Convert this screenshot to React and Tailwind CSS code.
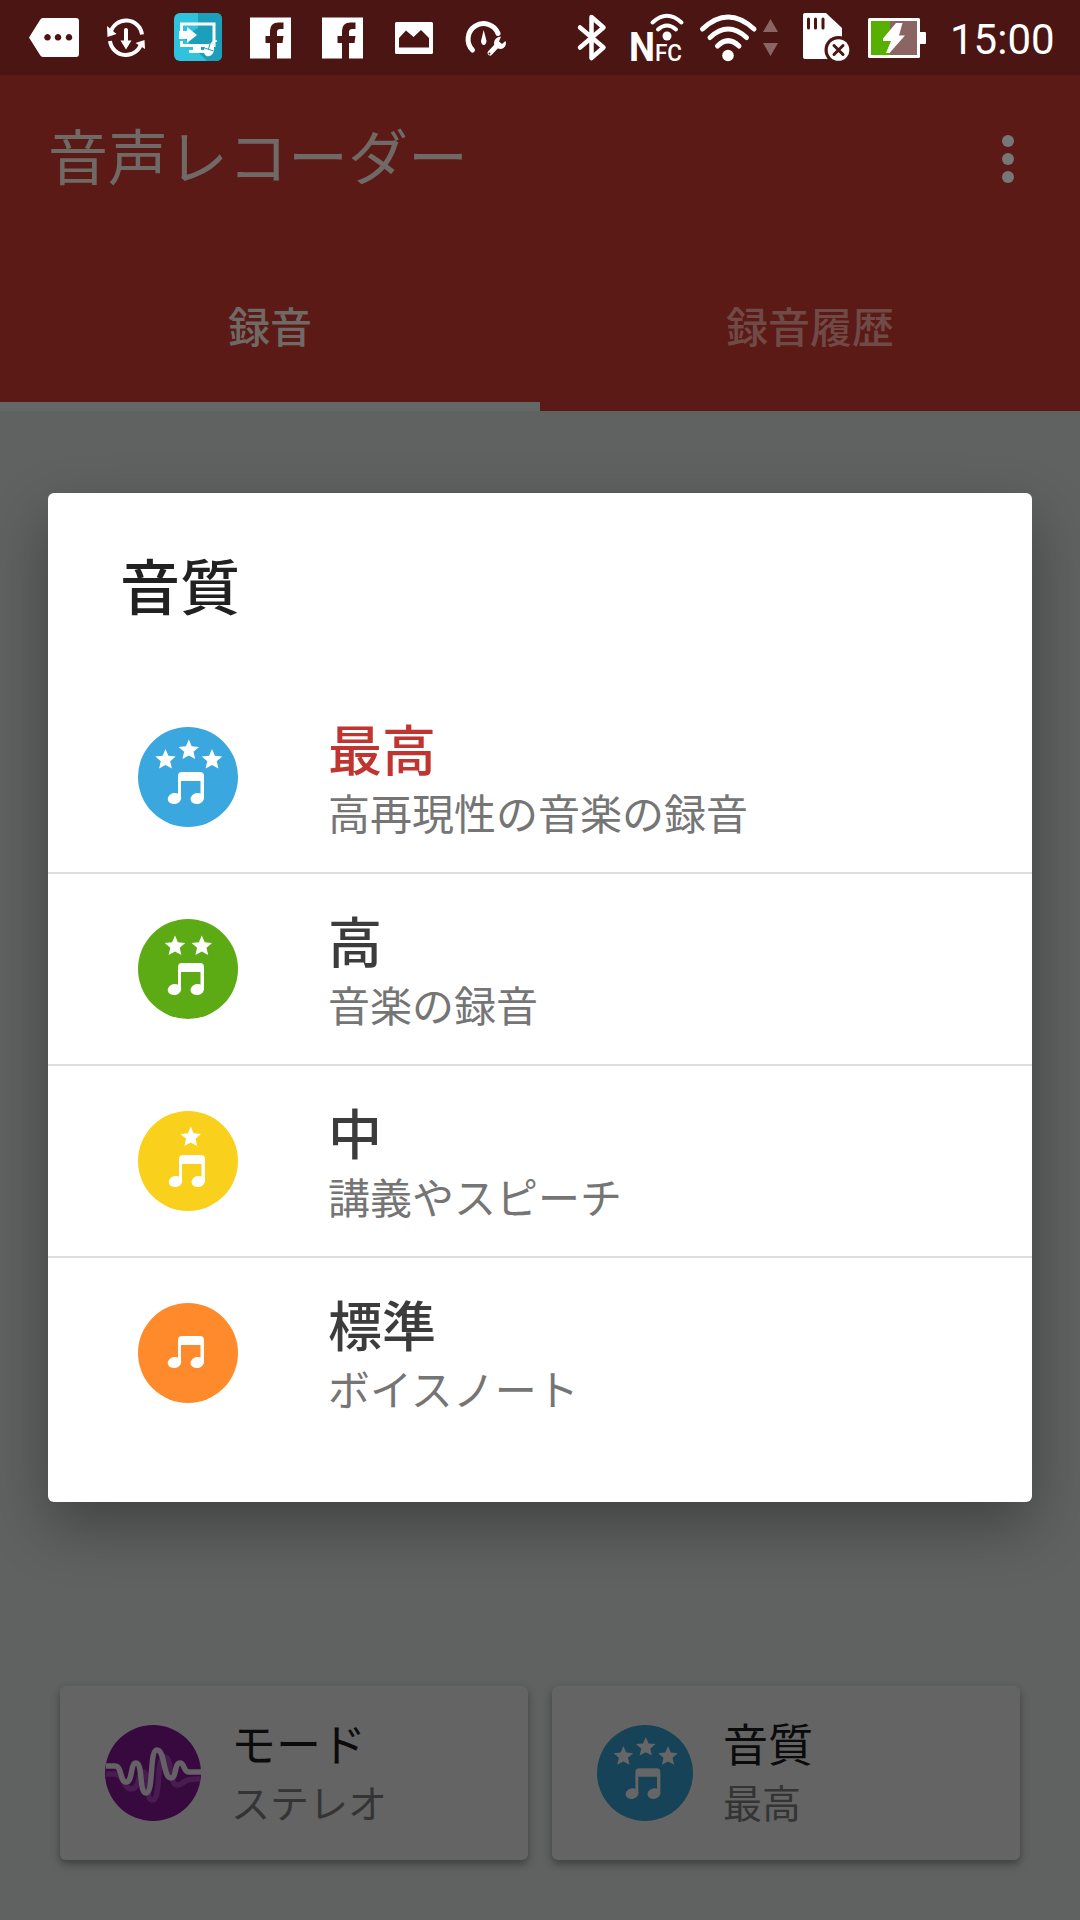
const jp = "font-['Noto_Sans_CJK_JP',sans-serif]";

const qualities = [
  { title: "最高", desc: "高再現性の音楽の録音", color: "#3aa7de", stars: [[27.5, 32.5], [50.8, 23], [74, 32.5]], selected: true },
  { title: "高", desc: "音楽の録音", color: "#5dab14", stars: [[37, 27], [63.8, 27]], noteY: -1 },
  { title: "中", desc: "講義やスピーチ", color: "#f9d11c", stars: [[52.8, 26]], noteX: 1, noteY: -1 },
  { title: "標準", desc: "ボイスノート", color: "#ff8a2b", stars: [], noteY: -12 },
];

const starPath =
  "M0 -10.5L2.9 -3.8L10.2 -3.1L4.7 1.7L6.4 8.9L0 5.5L-6.4 8.9L-4.7 1.7L-10.2 -3.1L-2.9 -3.8Z";

const QualityIcon = ({ color, stars, size = 100, fg = "#fff", noteX = 0, noteY = 0 }) => (
  <svg width={size} height={size} viewBox="0 0 100 100" className="shrink-0">
    <circle cx="50" cy="50" r="50" fill={color} />
    <g fill={fg}>
      {stars.map(([x, y]) => (
        <path key={x} d={starPath} transform={`translate(${x} ${y})`} />
      ))}
      <g transform={`translate(${noteX} ${noteY})`}>
        <path d="M40 72V49Q40 45 44 45H62Q66 45 66 49V72H62.500V54H43V72Z" />
        <ellipse cx="36.5" cy="71.5" rx="6.8" ry="5.5" transform="rotate(-12 36.5 71.5)" />
        <ellipse cx="59.3" cy="71.5" rx="6.8" ry="5.5" transform="rotate(-12 59.3 71.5)" />
      </g>
    </g>
  </svg>
);

// A slice of the status bar, `w` pixels wide and starting at `x`
const Glyph = ({ x, w, children }) => (
  <svg width={w} height="75" viewBox={`${x} 0 ${w} 75`} fill="#fff" className="shrink-0">
    {children}
  </svg>
);

const Facebook = ({ x }) => (
  <g transform={`translate(${x} 17.5)`}>
    <path d="M0 0H41V41H27V25.500H32.500L33.500 18.500H27V14.500Q27 11.500 30.500 11.500H33.500V5H28.500Q20 5 20 13.500V18.500H15.500V25.500H20V41H0Z" />
  </g>
);

const StatusBar = () => (
  <div className="flex h-[75px] items-center bg-[#4a1512]">
    <Glyph x={0} w={93}>
      <path
        fillRule="evenodd"
        d="M43 18H76Q79 18 79 21V54Q79 57 76 57H43Q41 57 40 55L29 37.500L40 20Q41 18 43 18ZM47.500 34a3.300 3.300 0 1 0 .01 0ZM58 34a3.300 3.300 0 1 0 .01 0ZM69 34a3.300 3.300 0 1 0 .01 0Z"
      />
    </Glyph>
    <Glyph x={93} w={67}>
      <g fill="none" stroke="#fff" strokeWidth="4">
        <path d="M110.500 33A16 16 0 0 1 142 34.500" />
        <path d="M110 41A16 16 0 0 0 141.500 42.500" />
        <path d="M126 30V44" strokeLinecap="round" />
      </g>
      <path d="M107 26L107.500 37L116.500 34ZM145 49L144.500 40L135.500 43ZM120.500 40.500H131.500L126 49.500Z" />
    </Glyph>
    <Glyph x={160} w={76}>
      <rect x="174" y="13" width="48" height="48" rx="6" fill="#2fc3de" />
      <path d="M198 13H216Q222 13 222 19V55Q222 61 216 61H207L183 37L198 28Z" fill="#1b9fba" />
      <path d="M181.500 31V24H214V45.500H181.500V41" fill="none" stroke="#fff" strokeWidth="3" />
      <path d="M179 31H187V27L197 35L187 43V39H179ZM193 46H201V50H205V53H189V50H193Z" />
      <ellipse cx="209" cy="50" rx="5" ry="6.500" transform="rotate(20 209 50)" />
      <path d="M211 45Q212 41 217 41" fill="none" stroke="#fff" strokeWidth="1.500" />
      <path d="M204.500 48L213.500 51M210 44L208.500 49" stroke="#1b9fba" />
    </Glyph>
    <Glyph x={236} w={70}>
      <Facebook x={250} />
    </Glyph>
    <Glyph x={306} w={72}>
      <Facebook x={322} />
    </Glyph>
    <Glyph x={378} w={72}>
      <path
        fillRule="evenodd"
        d="M396.500 22H431.500Q433 22 433 23.500V52.500Q433 54 431.500 54H396.500Q395 54 395 52.500V23.500Q395 22 396.500 22ZM399 47.500H429V38L421 30L413.500 37L406 30.500L399 38Z"
      />
    </Glyph>
    <Glyph x={450} w={110}>
      <path d="M472.500 50A15.500 15.500 0 1 1 498 33.500" fill="none" stroke="#fff" strokeWidth="5" strokeLinecap="round" />
      <path d="M483.700 30L486.500 41Q486 45 483.700 45Q481.500 45 481 41Z" />
      <path d="M490 53L498 44.500" stroke="#fff" strokeWidth="5" strokeLinecap="round" />
      <path d="M501 36.500L499 41.500L502 44L505.500 41Q507 45 503.500 48Q500 50 496 47.500L494 44Q494 37 501 36.500Z" />
      <circle cx="489.500" cy="53.500" r="1" fill="#4a1512" />
    </Glyph>
    <Glyph x={560} w={60}>
      <path d="M580 27.500L603.500 47.500L591.500 58V17L603.500 27.500L580 47.500" fill="none" stroke="#fff" strokeWidth="4.500" strokeLinecap="round" strokeLinejoin="round" />
    </Glyph>
    <Glyph x={620} w={70}>
      <g fontFamily="Roboto, sans-serif" fontWeight="700">
        <text x="629" y="61" fontSize="41" textLength="26" lengthAdjust="spacingAndGlyphs">N</text>
        <text x="655" y="60.500" fontSize="23" fontWeight="500" textLength="27" lengthAdjust="spacingAndGlyphs">FC</text>
      </g>
      <circle cx="667" cy="36" r="4.500" />
      <path d="M652.500 22.500Q667 9 681.500 22.500M658 29.500Q667 21.500 676 29.500" fill="none" stroke="#fff" strokeWidth="4" strokeLinecap="round" />
    </Glyph>
    <Glyph x={690} w={100}>
      <path d="M702.500 29Q728 5 754 29M710 37.500Q728 20.500 746.500 37.500M717.500 46Q728 35.500 739 46" fill="none" stroke="#fff" strokeWidth="5" strokeLinecap="round" />
      <circle cx="728" cy="55.500" r="5.800" />
      <path d="M770.500 19L778 32H763ZM763 43H778L770.500 56Z" fill="#8a6563" />
    </Glyph>
    <Glyph x={790} w={70}>
      <path d="M805 13H826L842 28V59H805Q803 59 803 57V15Q803 13 805 13Z" />
      <path d="M808.500 19V28M815.500 19V28M823 19V28" stroke="#4a1512" strokeWidth="3" strokeLinecap="round" />
      <circle cx="838.500" cy="50" r="14" fill="#4a1512" />
      <circle cx="838.500" cy="50" r="10.800" />
      <path d="M834 45.500L843 54.500M843 45.500L834 54.500" stroke="#4a1512" strokeWidth="3" strokeLinecap="round" />
    </Glyph>
    <Glyph x={860} w={90}>
      <rect x="868" y="18" width="52" height="40" rx="1.500" />
      <rect x="919" y="32" width="7" height="12" rx="1" />
      <rect x="871" y="21" width="19" height="34" fill="#57b000" />
      <rect x="890" y="21" width="27" height="34" fill="#8a6563" />
      <path d="M896 23H902.500L899 35.500H905L889.500 53H886L891 41H883V38.500Z" />
    </Glyph>
    <span className="pt-1 font-[Roboto,sans-serif] text-[42px] leading-none text-white">15:00</span>
  </div>
);

const Header = () => (
  <header className="flex h-[336px] flex-col bg-[#5c1a16]">
    <div className="flex h-[168px] items-center justify-between pr-[66px] pl-12">
      <h1 className="pb-2.5 text-[60px] leading-none text-[#706a67]">音声レコーダー</h1>
      <div className="flex flex-col gap-1.5">
        <i className="size-3 rounded-full bg-[#777]" />
        <i className="size-3 rounded-full bg-[#777]" />
        <i className="size-3 rounded-full bg-[#777]" />
      </div>
    </div>
    <nav className="grid flex-1 grid-cols-2 text-center text-[42px] font-medium">
      <div className="flex items-center justify-center border-b-9 border-[#636866] pt-1 text-[#706a67]">録音</div>
      <div className="flex items-center justify-center border-b-9 border-transparent pt-1 text-[#704a46]">録音履歴</div>
    </nav>
  </header>
);

const Dialog = () => (
  <section className="absolute top-[493px] left-12 h-[1009px] w-[984px] rounded-md bg-white shadow-[0_24px_60px_rgba(0,0,0,0.32)]">
    <h2 className="flex h-[189px] items-center pb-2 pl-[72px] text-[60px] leading-none font-medium text-[#212121]">音質</h2>
    <ul className="divide-y-2 divide-[#dedede]">
      {qualities.map((q) => (
        <li key={q.title} className="flex h-48 items-center pl-[90px] last:h-[190px]">
          <QualityIcon {...q} />
          <div className="ml-[90px] pt-1.5">
            <p
              className={
                q.selected
                  ? "text-[54px] leading-[64px] font-medium text-[#c13531]"
                  : "text-[54px] leading-[64px] font-medium text-[#3c3c3c]"
              }>
              {q.title}
            </p>
            <p className="text-[42px] leading-[64px] text-[#757575]">{q.desc}</p>
          </div>
        </li>
      ))}
    </ul>
  </section>
);

const Card = ({ icon, title, value }) => (
  <div className="flex h-[174px] flex-1 items-center rounded-md bg-[#646464] pl-[45px] shadow-[0_4px_8px_rgba(0,0,0,0.35)]">
    {icon}
    <div className="ml-[30px] pb-0.5">
      <p className="text-[45px] leading-[58px] text-[#0b0b0b]">{title}</p>
      <p className="text-[39px] leading-[58px] text-[#343434]">{value}</p>
    </div>
  </div>
);

const WaveIcon = () => (
  <svg width="96" height="96" viewBox="0 0 96 96" fill="none" strokeWidth="5.500" strokeLinejoin="round">
    <circle cx="48" cy="48" r="48" fill="#37093f" />
    <path d="M1 49H10C19 49 18 64 26 64C36 64 32 47 38 47C45 47 40 75 47 75C57 75 50 32 60 32C67 32 64 60 72 60C80 60 76 53 95 54" stroke="#481c50" />
    <path d="M1 41H10C17 41 15 57 21 57C28 57 25 38 31 38C38 38 34 68 41 68C49 68 44 25 52 25C60 25 58 53 66 53C72 53 69 38 75 38C80 38 78 47 84 47H96" stroke="#666067" />
  </svg>
);

const App = () => {
  return (
    <div className={`relative flex h-[1920px] w-[1080px] flex-col overflow-hidden bg-[#5f6260] ${jp}`}>
      <StatusBar />
      <Header />
      <main className="flex flex-1 flex-col justify-end px-15 pb-15">
        <div className="flex gap-6">
          <Card icon={<WaveIcon />} title="モード" value="ステレオ" />
          <Card
            icon={<QualityIcon size={96} color="#174359" fg="#666" stars={qualities[0].stars} />}
            title="音質"
            value="最高"
          />
        </div>
      </main>
      <Dialog />
    </div>
  );
};

export default App;
